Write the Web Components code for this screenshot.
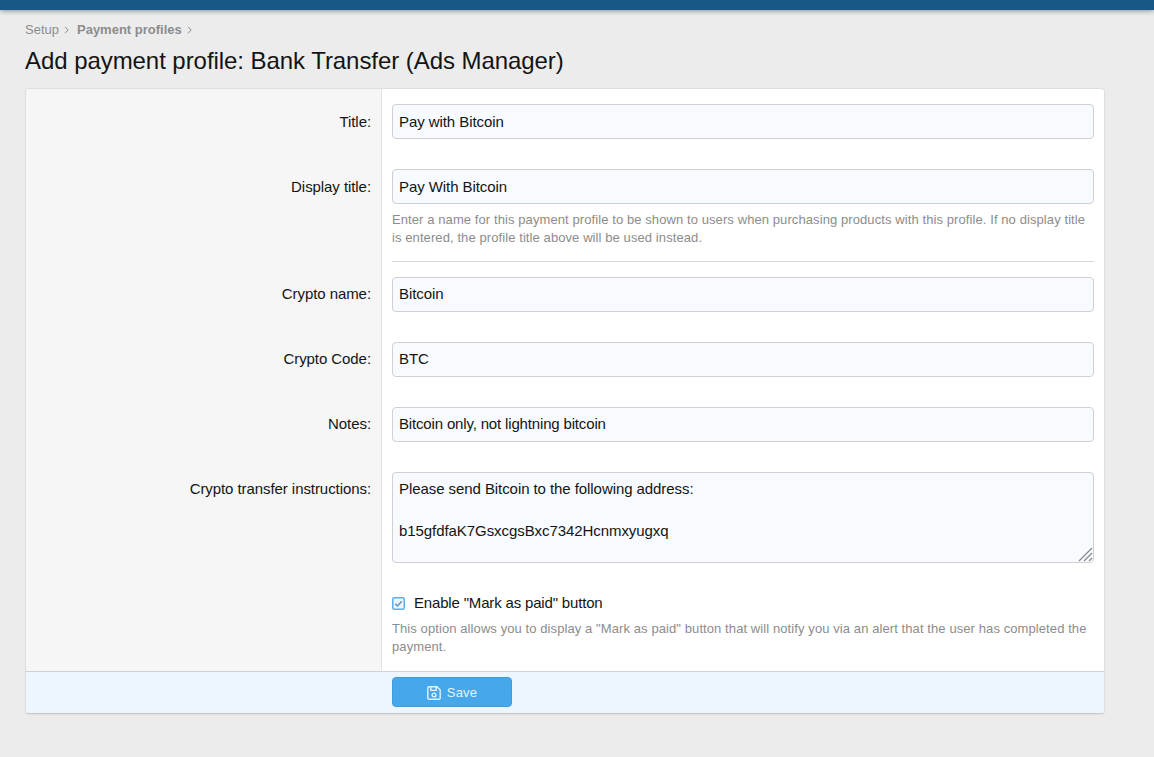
<!DOCTYPE html>
<html>
<head>
<meta charset="utf-8">
<title>Add payment profile</title>
<style>
  html, body { margin: 0; padding: 0; background: #ececec; }
  body { font: 15px/20px "Liberation Sans", Arial, sans-serif; letter-spacing: -.07px; color: #141414; }
</style>
</head>
<body>
<admin-topbar></admin-topbar>
<admin-page>
  <admin-breadcrumb slot="crumbs"></admin-breadcrumb>
  <span slot="title">Add payment profile: Bank Transfer (Ads Manager)</span>
  <form-block>
    <form-row label="Title:" low><text-box low>Pay with Bitcoin</text-box></form-row>
    <form-row label="Display title:" low divided>
      <text-box low>Pay With Bitcoin</text-box>
      <form-hint>Enter a name for this payment profile to be shown to users when purchasing products with this profile. If no display title is entered, the profile title above will be used instead.</form-hint>
    </form-row>
    <form-row label="Crypto name:"><text-box>Bitcoin</text-box></form-row>
    <form-row label="Crypto Code:"><text-box>BTC</text-box></form-row>
    <form-row label="Notes:"><text-box style="letter-spacing:-.16px">Bitcoin only, not lightning bitcoin</text-box></form-row>
    <form-row label="Crypto transfer instructions:"><text-box multiline>Please send Bitcoin to the following address:

b15gfdfaK7GsxcgsBxc7342Hcnmxyugxq</text-box></form-row>
    <form-row>
      <check-row>Enable "Mark as paid" button</check-row>
      <form-hint>This option allows you to display a "Mark as paid" button that will notify you via an alert that the user has completed the payment.</form-hint>
    </form-row>
    <save-button slot="footer">Save</save-button>
  </form-block>
</admin-page>

<script>
class AdminTopbar extends HTMLElement {
    constructor() {
        super();
        this.attachShadow({ mode: 'open' });
        this.shadowRoot.innerHTML = `
          <style>
            :host {
              display: block;
              height: 10px;
              background: #185886;
              box-shadow: 0 1px 5px rgba(0,0,0,.4);
            }
          </style>
        `;
    }
}

class AdminPage extends HTMLElement {
    constructor() {
        super();
        this.attachShadow({ mode: 'open' });
        this.shadowRoot.innerHTML = `
          <style>
            :host {
              display: block;
              padding: 10px 49px 43px 25px;
            }
            h1 {
              margin: 6px 0 12px;
              font-size: 24px;
              line-height: 30px;
              font-weight: 400;
              letter-spacing: -.06px;
              color: #141414;
            }
          </style>
          <slot name="crumbs"></slot>
          <h1><slot name="title"></slot></h1>
          <slot></slot>
        `;
    }
}

class AdminBreadcrumb extends HTMLElement {
    constructor() {
        super();
        this.attachShadow({ mode: 'open' });
        this.shadowRoot.innerHTML = `
          <style>
            :host {
              display: flex;
              align-items: center;
              height: 20px;
              font-size: 13px;
              letter-spacing: 0;
              color: #8c8c8c;
            }
            b { font-weight: 700; }
            svg { width: 5px; height: 8px; margin: 0 8px 0 5px; }
          </style>
          <span>Setup</span>
          <svg viewBox="0 0 5 8"><path d="M1 .8 4.200 4 1 7.200" fill="none" stroke="#8c8c8c" stroke-width="1"/></svg>
          <b>Payment profiles</b>
          <svg viewBox="0 0 5 8"><path d="M1 .8 4.200 4 1 7.200" fill="none" stroke="#8c8c8c" stroke-width="1"/></svg>
        `;
    }
}

class FormBlock extends HTMLElement {
    constructor() {
        super();
        this.attachShadow({ mode: 'open' });
        this.shadowRoot.innerHTML = `
          <style>
            :host {
              display: block;
              background: #fff;
              border: 1px solid #dfdfdf;
              border-bottom-color: #c8c8c8;
              border-radius: 4px;
              overflow: hidden;
              box-shadow: 0 1px 2px rgba(0,0,0,.05);
            }
            .footer {
              display: flex;
              height: 42px;
              box-sizing: border-box;
              padding: 5px 0 0 366px;
              background: #edf6fd;
              border-top: 1px solid #d0d0d0;
            }
          </style>
          <slot></slot>
          <div class="footer"><slot name="footer"></slot></div>
        `;
    }
}

class FormRow extends HTMLElement {
    static get observedAttributes() { return ['label']; }
    constructor() {
        super();
        this.attachShadow({ mode: 'open' });
        this.shadowRoot.innerHTML = `
          <style>
            :host {
              display: grid;
              grid-template-columns: 356px 1fr;
            }
            .label {
              background: #f6f6f6;
              border-right: 1px solid #e2e2e2;
              padding: 22px 10px 0 0;
              text-align: right;
              color: #141414;
            }
            :host([low]) .label { padding-top: 23px; }
            .value {
              padding: 15px 10px;
              min-width: 0;
            }
            :host([divided]) .value { padding-bottom: 14px; }
            .line { display: none; }
            .spacer { display: none; }
            :host([divided]) .line {
              display: block;
              grid-column: 2;
              height: 1px;
              margin: 0 10px;
              background: #d8d8d8;
            }
            :host([divided]) .spacer {
              display: block;
              background: #f6f6f6;
              border-right: 1px solid #e2e2e2;
              grid-column: 1;
              grid-row: 2;
            }
          </style>
          <div class="label"></div>
          <div class="value"><slot></slot></div>
          <div class="spacer"></div>
          <div class="line"></div>
        `;
    }
    attributeChangedCallback(attrName, oldVal, newVal) {
        this.shadowRoot.querySelector('.label').textContent = newVal;
    }
}

class TextBox extends HTMLElement {
    constructor() {
        super();
        this.attachShadow({ mode: 'open' });
        this.shadowRoot.innerHTML = `
          <style>
            :host {
              display: block;
              position: relative;
              box-sizing: border-box;
              height: 35px;
              padding: 6px 6px;
              background: #f7fbff;
              border: 1px solid #d0d0d0;
              border-radius: 4px;
              color: #141414;
            }
            :host([low]) { padding-top: 7px; }
            .text { white-space: pre-line; }
            :host([multiline]) {
              height: 91px;
              line-height: 21px;
              padding-top: 5px;
            }
            svg { display: none; }
            :host([multiline]) svg {
              display: block;
              position: absolute;
              right: 0;
              bottom: 0;
              width: 15px;
              height: 15px;
            }
          </style>
          <div class="text"><slot></slot></div>
          <svg viewBox="0 0 15 15"><path d="M1 14 14 1M6 14l8-8M11 14l3-3" fill="none" stroke="#8a8a8a" stroke-width="1.300"/></svg>
        `;
    }
}

class FormHint extends HTMLElement {
    constructor() {
        super();
        this.attachShadow({ mode: 'open' });
        this.shadowRoot.innerHTML = `
          <style>
            :host {
              display: block;
              margin-top: 7px;
              font-size: 13px;
              line-height: 18px;
              letter-spacing: .09px;
              color: #8c8c8c;
            }
          </style>
          <slot></slot>
        `;
    }
}

class CheckRow extends HTMLElement {
    constructor() {
        super();
        this.attachShadow({ mode: 'open' });
        this.shadowRoot.innerHTML = `
          <style>
            :host {
              display: flex;
              align-items: center;
              gap: 9px;
              height: 20px;
              letter-spacing: -.17px;
              color: #141414;
            }
            svg { width: 13px; height: 13px; flex: none; }
          </style>
          <svg viewBox="0 0 13 13">
            <rect x=".75" y=".75" width="11.500" height="11.500" rx="1.500" fill="#eef6fc" stroke="#5bb0ea" stroke-width="1.500"/>
            <path d="M3.200 6.800 5.500 9 9.800 4.200" fill="none" stroke="#5b94c4" stroke-width="1.500"/>
          </svg>
          <span><slot></slot></span>
        `;
    }
}

class SaveButton extends HTMLElement {
    constructor() {
        super();
        this.attachShadow({ mode: 'open' });
        this.shadowRoot.innerHTML = `
          <style>
            :host {
              display: flex;
              align-items: center;
              justify-content: center;
              gap: 6px;
              box-sizing: border-box;
              width: 120px;
              height: 30px;
              background: #47a7eb;
              border: 1px solid #3f9ad9;
              border-radius: 4px;
              font-size: 13px;
              letter-spacing: .2px;
              color: #e4f2fc;
            }
            span { padding-top: 2px; }
            svg { width: 14px; height: 14px; flex: none; margin-top: 1px; }
          </style>
          <svg viewBox="0 0 14 14" fill="none" stroke="#e4f2fc" stroke-width="1.400">
            <path d="M.8 2a1.200 1.200 0 0 1 1.200-1.200h8l3.200 3.200v8a1.200 1.200 0 0 1-1.200 1.200H2A1.200 1.200 0 0 1 .8 12z"/>
            <path d="M3.800 1v3.400h5.400V1"/>
            <circle cx="7" cy="9" r="1.900"/>
          </svg>
          <span><slot></slot></span>
        `;
    }
}

customElements.define("admin-topbar", AdminTopbar);
customElements.define("admin-page", AdminPage);
customElements.define("admin-breadcrumb", AdminBreadcrumb);
customElements.define("form-block", FormBlock);
customElements.define("form-row", FormRow);
customElements.define("text-box", TextBox);
customElements.define("form-hint", FormHint);
customElements.define("check-row", CheckRow);
customElements.define("save-button", SaveButton);
</script>
</body>
</html>
